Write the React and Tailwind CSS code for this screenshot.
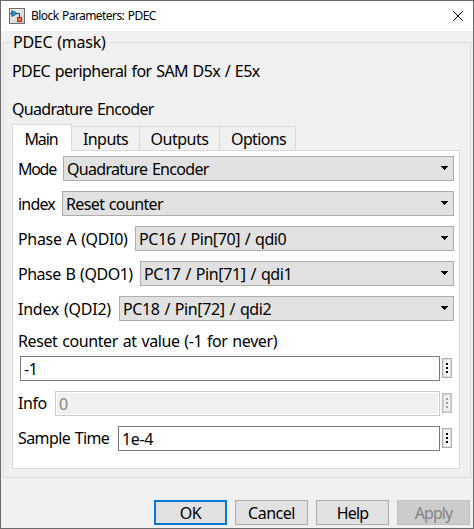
const tabs = [
  { name: "Main", cls: "h-[27px] w-[60px] border-x border-t bg-white pt-px pr-[2px] tracking-[-1.1px]" },
  { name: "Inputs", cls: "h-[25px] w-[68px] border-t border-r tracking-[-0.55px]" },
  { name: "Outputs", cls: "h-[25px] w-[80px] border-t border-r tracking-[-0.5px]" },
  { name: "Options", cls: "h-[25px] w-[76px] border-t border-r pl-[2px] tracking-[-0.65px]" },
];

function Tab({ name, cls }) {
  return (
    <div className={`flex items-center justify-center border-[#d9d9d9] whitespace-nowrap ${cls}`}>
      <span>{name}</span>
    </div>
  );
}

function Combo({ label, value, labelCls, valueCls }) {
  return (
    <div className="flex h-[25px] items-center">
      <span className={`shrink-0 whitespace-nowrap ${labelCls}`}>{label}</span>
      <div className="flex h-[25px] flex-1 items-center justify-between border border-[#adadad] bg-[#e1e1e1] pr-[5px] pl-[3px]">
        <span className={`whitespace-nowrap ${valueCls}`}>{value}</span>
        <svg width="7" height="4" viewBox="0 0 7 4" shapeRendering="crispEdges" className="-mt-[1px]">
          <path d="M0 0h7v1H6v1H5v1H4v1H3V3H2V2H1V1H0z" fill="#000" />
        </svg>
      </div>
    </div>
  );
}

function MoreButton({ disabled }) {
  return (
    <div
      className={`mr-[2px] ml-[2px] flex h-5 w-[10px] flex-col items-center justify-center gap-[2px] border ${
        disabled
          ? "border-[#bfbfbf] bg-[#efefef] shadow-[inset_0_0_0_1px_#d0d0d0]"
          : "border-[#adadad] bg-[#f4f4f4] shadow-[inset_0_0_0_1px_#e1e1e1]"
      }`}
    >
      {[0, 1, 2].map((i) => (
        <i key={i} className={`block size-[2px] ${disabled ? "bg-[#a0a0a0]" : "bg-black"}`} />
      ))}
    </div>
  );
}

function Field({ label, value, labelCls, disabled }) {
  return (
    <div className="flex h-[25px] items-start">
      <span className={`shrink-0 leading-[25px] whitespace-nowrap ${labelCls}`}>{label}</span>
      <div
        className={`h-[25px] flex-1 border bg-white p-px ${
          disabled ? "border-[#cccccc] text-[#838383]" : "border-[#7a7a7a]"
        }`}
      >
        <div className={`flex h-full items-center pl-[2px] ${disabled ? "bg-[#f0f0f0]" : ""}`}>{value}</div>
      </div>
      <div className="pt-[2px]">
        <MoreButton disabled={disabled} />
      </div>
    </div>
  );
}

export default function App() {
  return (
    <div className="flex h-[529px] w-[474px] flex-col border border-[#6b696d] bg-[#f0f0f0] font-['Noto_Sans',sans-serif] text-[16px] leading-5 tracking-[-0.4px] text-black [word-spacing:1px]">
      <header className="flex h-[30px] shrink-0 items-center bg-white pl-2 text-[12px] tracking-[-0.57px]">
        <svg width="16" height="16" viewBox="0 0 16 16">
          <defs>
            <linearGradient id="tile" x1="0" y1="0" x2="1" y2="1">
              <stop offset="0" stopColor="#fff" />
              <stop offset="1" stopColor="#c4c4c4" />
            </linearGradient>
          </defs>
          <rect x=".5" y=".5" width="15" height="15" fill="url(#tile)" stroke="#6d6d6d" />
          <path d="M1 5.5h2M8 5.5h2.500v4" fill="none" stroke="#333" />
          <path d="M2.7 2.4v6.200L8.500 5.500z" fill="#2f94d0" stroke="#17567f" strokeWidth=".9" />
          <rect x="8.5" y="9.500" width="4" height="4" fill="#ef6e32" stroke="#a33513" />
        </svg>
        <span className="ml-[6px] flex-1">Block Parameters: PDEC</span>
        <svg width="10" height="10" viewBox="0 0 10 10" className="mr-[10px]">
          <path d="M.3.3l9.4 9.4M9.7.3L.3 9.7" stroke="#000" fill="none" />
        </svg>
      </header>

      <fieldset className="mx-[2px] mt-[1px] h-[446px] shrink-0 border border-[#dcdcdc] pr-[10px] pl-[8px]">
        <legend className="-ml-px h-5 pr-[3px] pl-[2px] tracking-[-0.25px]">PDEC (mask)</legend>
        <p className="h-[38px] pt-[9px] tracking-[-0.56px]">PDEC peripheral for SAM D5x / E5x</p>
        <p className="h-[34px] pt-[9px] tracking-[-0.7px]">Quadrature Encoder</p>

        <nav className="relative z-10 flex h-[27px] items-end">
          {tabs.map((t) => (
            <Tab key={t.name} {...t} />
          ))}
        </nav>
        <section className="-mt-px flex h-[319px] w-[448px] flex-col gap-[10px] border border-[#d9d9d9] bg-white pt-[5px] pr-[5px] pl-[5px]">
          <Combo label="Mode" value="Quadrature Encoder" labelCls="w-[45px] tracking-[-1.3px]" valueCls="tracking-[-0.7px]" />
          <Combo label="index" value="Reset counter" labelCls="w-[44px] tracking-[-0.8px]" valueCls="tracking-[-0.63px]" />
          <Combo label="Phase A (QDI0)" value="PC16 / Pin[70] / qdi0" labelCls="w-[117px] tracking-[-0.33px]" valueCls="tracking-[-0.42px]" />
          <Combo label="Phase B (QDO1)" value="PC17 / Pin[71] / qdi1" labelCls="w-[122px] tracking-[-0.48px]" valueCls="tracking-[-0.37px]" />
          <Combo label="Index (QDI2)" value="PC18 / Pin[72] / qdi2" labelCls="w-[101px] tracking-[-0.25px]" valueCls="tracking-[-0.37px]" />
          <div className="-mb-[10px] flex h-[25px] items-start leading-5">Reset counter at value (-1 for never)</div>
          <Field value="-1" labelCls="w-[2px]" />
          <Field label="Info" value="0" labelCls="w-[37px]" disabled />
          <Field label="Sample Time" value="1e-4" labelCls="w-[100px] tracking-[-0.6px]" />
        </section>
      </fieldset>

      <footer className="mt-[22px] flex justify-end gap-2 pr-[3px]">
        <button className="h-[25px] w-[73px] border-2 border-[#0078d7] bg-[#e1e1e1]">OK</button>
        <button className="h-[25px] w-[73px] border border-[#adadad] bg-[#e1e1e1] tracking-[-0.5px]">Cancel</button>
        <button className="h-[25px] w-[73px] border border-[#adadad] bg-[#e1e1e1] tracking-[-0.8px]">Help</button>
        <button disabled className="h-[25px] w-[73px] border border-[#bfbfbf] bg-[#cccccc] tracking-[-0.9px] text-[#838383]">Apply</button>
      </footer>
    </div>
  );
}
